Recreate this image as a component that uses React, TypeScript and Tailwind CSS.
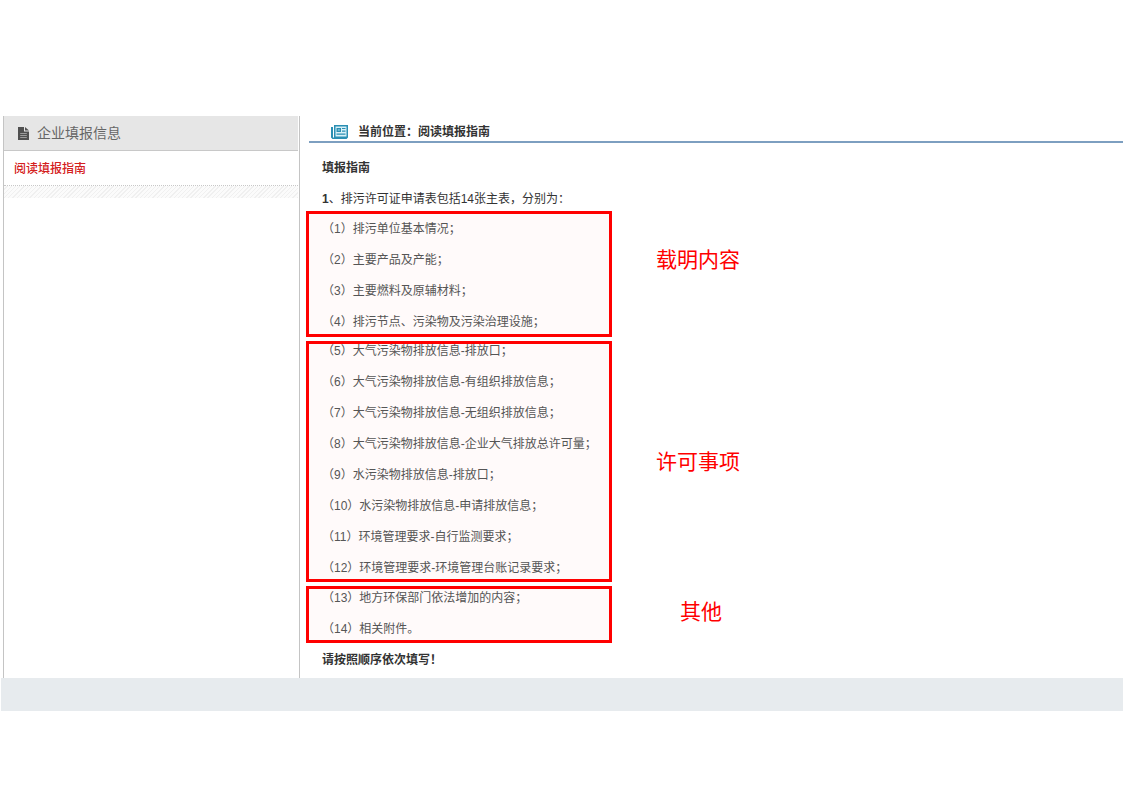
import clsx from "clsx"

type Group = {
  label: string
  boxClass: string
  labelClass: string
  items: string[]
}

const groups: Group[] = [
  {
    label: "载明内容",
    boxClass: "pt-2 pb-[5px]",
    labelClass: "ml-11 self-start mt-[37px]",
    items: ["排污单位基本情况；", "主要产品及产能；", "主要燃料及原辅材料；", "排污节点、污染物及污染治理设施；"],
  },
  {
    label: "许可事项",
    boxClass: "pb-1",
    labelClass: "ml-11 self-center",
    items: [
      "大气污染物排放信息-排放口；",
      "大气污染物排放信息-有组织排放信息；",
      "大气污染物排放信息-无组织排放信息；",
      "大气污染物排放信息-企业大气排放总许可量；",
      "水污染物排放信息-排放口；",
      "水污染物排放信息-申请排放信息；",
      "环境管理要求-自行监测要求；",
      "环境管理要求-环境管理台账记录要求；",
    ],
  },
  {
    label: "其他",
    boxClass: "pt-0.5 pb-1",
    labelClass: "ml-[47px] self-start mt-3.5",
    items: ["地方环保部门依法增加的内容；", "相关附件。"],
  },
]

// number of the first row in each group
const starts = groups.map((_, i) => groups.slice(0, i).reduce((sum, g) => sum + g.items.length, 1))

function FileIcon() {
  return (
    <svg viewBox="0 0 11 13" className="h-[13px] w-[11px] shrink-0" aria-hidden="true">
      <path d="M0 0h6v4.5h5V13H0z" fill="#505050" />
      <path d="M7 0l4 3.6H7z" fill="#505050" />
      <path d="M2.2 6.5h6.6M2.2 8.5h6.6M2.2 10.5h6.6" stroke="#b0b0b0" strokeWidth="0.8" />
    </svg>
  )
}

function NewsIcon() {
  return (
    <svg viewBox="0 0 17 14" className="h-3.5 w-[17px] shrink-0" aria-hidden="true">
      <path d="M0 2h2v10.5h1V0h14v12.5L15.5 14H1.5L0 12.5z" fill="#2b8fb3" />
      <path d="M4.5 1.5h11v10h-11z" fill="#d9f1f8" />
      <path d="M5.5 3h4.5v4H5.5z" fill="#2b8fb3" />
      <path d="M6.8 4.3h2v1.4h-2z" fill="#8accdf" />
      <path d="M11 3.5h3.5M11 6.2h3.5M5.5 9.2h9" stroke="#2b8fb3" strokeWidth="1.2" />
    </svg>
  )
}

function Sidebar() {
  return (
    <aside className="w-[297px] shrink-0 border-x border-[#c4c4c4] pr-px">
      <h2 className="flex h-[35px] items-center gap-2 border-b border-[#c8c8c8] bg-[#e6e6e6] pl-3.5 text-sm text-[#666]">
        <FileIcon />
        企业填报信息
      </h2>
      <nav>
        <a
          href="#guide"
          className="flex h-[35px] items-center border-b border-dotted border-[#c8c8c8] pt-0.5 pl-2.5 text-xs font-medium text-[#d42020]"
        >
          阅读填报指南
        </a>
      </nav>
      <div className="h-3 bg-[repeating-linear-gradient(135deg,#fbfbfb_0px,#fbfbfb_2px,#f0f0f0_2px,#f0f0f0_3px)]" />
    </aside>
  )
}

function GroupRow({ group, start }: { group: Group; start: number }) {
  return (
    <section className="flex">
      <ul
        className={clsx(
          "flex w-[306px] shrink-0 flex-col gap-[17px] border-[3px] border-[#ff0000] bg-[#fffafa] pl-[13px] whitespace-nowrap text-[#555]",
          group.boxClass,
        )}
      >
        {group.items.map((item, i) => (
          <li key={item}>{`（${start + i}）${item}`}</li>
        ))}
      </ul>
      <p className={clsx("w-[84px] shrink-0 text-center text-[21px] leading-6 text-[#ff0000]", group.labelClass)}>
        {group.label}
      </p>
    </section>
  )
}

export default function App() {
  return (
    <div className="bg-white pt-[116px] font-['Liberation_Sans','Noto_Sans_CJK_SC',sans-serif]" lang="zh-CN">
      <div className="flex pl-[3px]">
        <Sidebar />
        <main className="min-w-0 flex-1 pb-[11px] pl-1.5 text-xs leading-[14px] text-[#333]">
          <header className="ml-[3px] flex h-[27px] items-center gap-2.5 border-b-2 border-[#7d9fc0] pt-1.5 pl-[22px]">
            <NewsIcon />
            <h1 className="font-bold">当前位置：阅读填报指南</h1>
          </header>
          <div className="pt-[18px] pb-1.5 pl-4" id="guide">
            <h2 className="font-bold">填报指南</h2>
            <p className="mt-[17px]">
              <b>1</b>、排污许可证申请表包括14张主表，分别为：
            </p>
          </div>
          <div className="-mt-px flex flex-col gap-1">
            {groups.map((group, i) => (
              <GroupRow key={group.label} group={group} start={starts[i]} />
            ))}
          </div>
          <p className="mt-2.5 pl-4 font-bold">请按照顺序依次填写！</p>
        </main>
      </div>
      <footer className="ml-px h-[33px] bg-[#e7ebee]" />
    </div>
  )
}
